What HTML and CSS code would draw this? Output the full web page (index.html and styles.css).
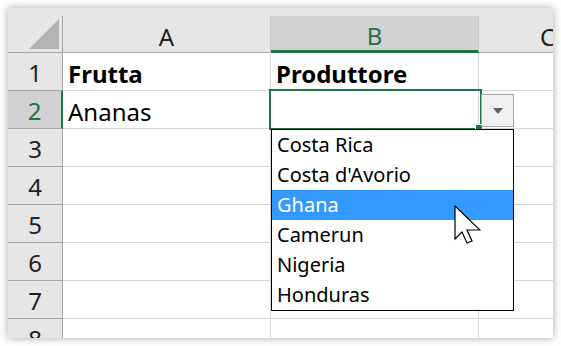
FILE: index.html
```html
<!DOCTYPE html>
<html lang="it">

<head>
  <meta charset="UTF-8">
  <meta name="viewport" content="width=device-width, initial-scale=1.0">
  <title>Convalida dati</title>
  <link rel="stylesheet" href="styles.css">
</head>

<body>
  <div class="sheet">
    <div class="grid">
      <!-- Intestazioni di colonna -->
      <div class="corner"><span class="corner-tri"></span></div>
      <div class="col-head">A</div>
      <div class="col-head col-sel">B</div>
      <div class="col-head">C</div>

      <div class="row-head">1</div>
      <div class="cell bold">Frutta</div>
      <div class="cell bold">Produttore</div>
      <div class="cell"></div>

      <div class="row-head row-sel">2</div>
      <div class="cell">Ananas</div>
      <div class="cell"></div>
      <div class="cell"></div>

      <div class="row-head">3</div>
      <div class="cell"></div>
      <div class="cell"></div>
      <div class="cell"></div>

      <div class="row-head">4</div>
      <div class="cell"></div>
      <div class="cell"></div>
      <div class="cell"></div>

      <div class="row-head">5</div>
      <div class="cell"></div>
      <div class="cell"></div>
      <div class="cell"></div>

      <div class="row-head">6</div>
      <div class="cell"></div>
      <div class="cell"></div>
      <div class="cell"></div>

      <div class="row-head">7</div>
      <div class="cell"></div>
      <div class="cell"></div>
      <div class="cell"></div>

      <div class="row-head">8</div>
      <div class="cell"></div>
      <div class="cell"></div>
      <div class="cell"></div>
    </div>

    <!-- Cella attiva B2 -->
    <div class="selection"></div>
    <div class="fill-handle"></div>

    <!-- Menu a tendina della convalida -->
    <div class="drop-btn"><span class="drop-arrow"></span></div>
    <ul class="drop-list">
      <li>Costa Rica</li>
      <li>Costa d'Avorio</li>
      <li class="active">Ghana</li>
      <li>Camerun</li>
      <li>Nigeria</li>
      <li>Honduras</li>
    </ul>

    <svg class="cursor" width="27" height="39" viewBox="0 0 27 39">
      <path d="M1,1 L1,34 L8,27 L13,38 L18,36 L13,25 L26,25 Z" fill="#fff" stroke="#000" stroke-width="1.2" stroke-linejoin="miter"/>
    </svg>
  </div>
</body>

</html>
```

FILE: styles.css
```css
/* Stili generali */
body {
  margin: 0;
  padding: 0;
  background: #fff;
  font-family: "Noto Sans", "Open Sans", sans-serif;
  overflow: hidden;
}

.sheet {
  position: relative;
  margin: 8px;
  width: 545px;
  height: 322px;
  padding-top: 8px;
  background: #e6e6e6;
  overflow: hidden;
  box-shadow: 0 0 8px rgba(0, 0, 0, 0.35);
}

/* Griglia del foglio */
.grid {
  display: grid;
  grid-template-columns: 55px 208px 208px 138px;
  grid-template-rows: 37px repeat(8, 38px);
}

.grid > div {
  box-sizing: border-box;
}

.corner {
  background: #e6e6e6;
  border-right: 1px solid #a6a6a6;
  border-bottom: 1px solid #a6a6a6;
  position: relative;
}

.corner-tri {
  position: absolute;
  right: 3px;
  bottom: 3px;
  width: 0;
  height: 0;
  border-left: 30px solid transparent;
  border-bottom: 30px solid #b4b4b4;
}

.col-head {
  background: #e6e6e6;
  border-right: 1px solid #c8c8c8;
  border-bottom: 1px solid #a6a6a6;
  display: flex;
  align-items: center;
  justify-content: center;
  padding-top: 4px;
  font-size: 24px;
  color: #222;
}

.col-sel {
  background: #d2d2d2;
  color: #217346;
  border-bottom: 3px solid #217346;
}

.row-head {
  background: #e6e6e6;
  border-right: 1px solid #a6a6a6;
  border-bottom: 1px solid #a6a6a6;
  display: flex;
  align-items: center;
  justify-content: center;
  padding-top: 2px;
  font-size: 24px;
  color: #222;
}

.row-sel {
  background: #d2d2d2;
  color: #217346;
  border-right: 2px solid #217346;
}

.cell {
  background: #fff;
  border-right: 1px solid #d4d4d4;
  border-bottom: 1px solid #d4d4d4;
  display: flex;
  align-items: center;
  padding: 4px 0 0 5px;
  font-size: 24px;
  color: #000;
}

.bold {
  font-weight: bold;
}

/* Cella selezionata */
.selection {
  position: absolute;
  left: 261px;
  top: 81px;
  width: 209px;
  height: 37px;
  border: 2px solid #217346;
}

.fill-handle {
  position: absolute;
  left: 467px;
  top: 116px;
  width: 6px;
  height: 6px;
  background: #217346;
  border: 1px solid #fff;
}

/* Pulsante e lista a tendina */
.drop-btn {
  position: absolute;
  left: 473px;
  top: 86px;
  width: 31px;
  height: 31px;
  background: #f0f0f0;
  border: 1px solid #a6a6a6;
  display: flex;
  align-items: center;
  justify-content: center;
}

.drop-arrow {
  width: 0;
  height: 0;
  border-left: 5px solid transparent;
  border-right: 5px solid transparent;
  border-top: 6px solid #606060;
}

.drop-list {
  position: absolute;
  left: 263px;
  top: 121px;
  width: 241px;
  margin: 0;
  padding: 0;
  list-style: none;
  background: #fff;
  border: 1px solid #000;
}

.drop-list li {
  height: 30px;
  line-height: 30px;
  padding-left: 5px;
  font-size: 20px;
  color: #000;
}

.drop-list li.active {
  background: #3399ff;
  color: #fff;
}

.cursor {
  position: absolute;
  left: 446px;
  top: 197px;
}
```
